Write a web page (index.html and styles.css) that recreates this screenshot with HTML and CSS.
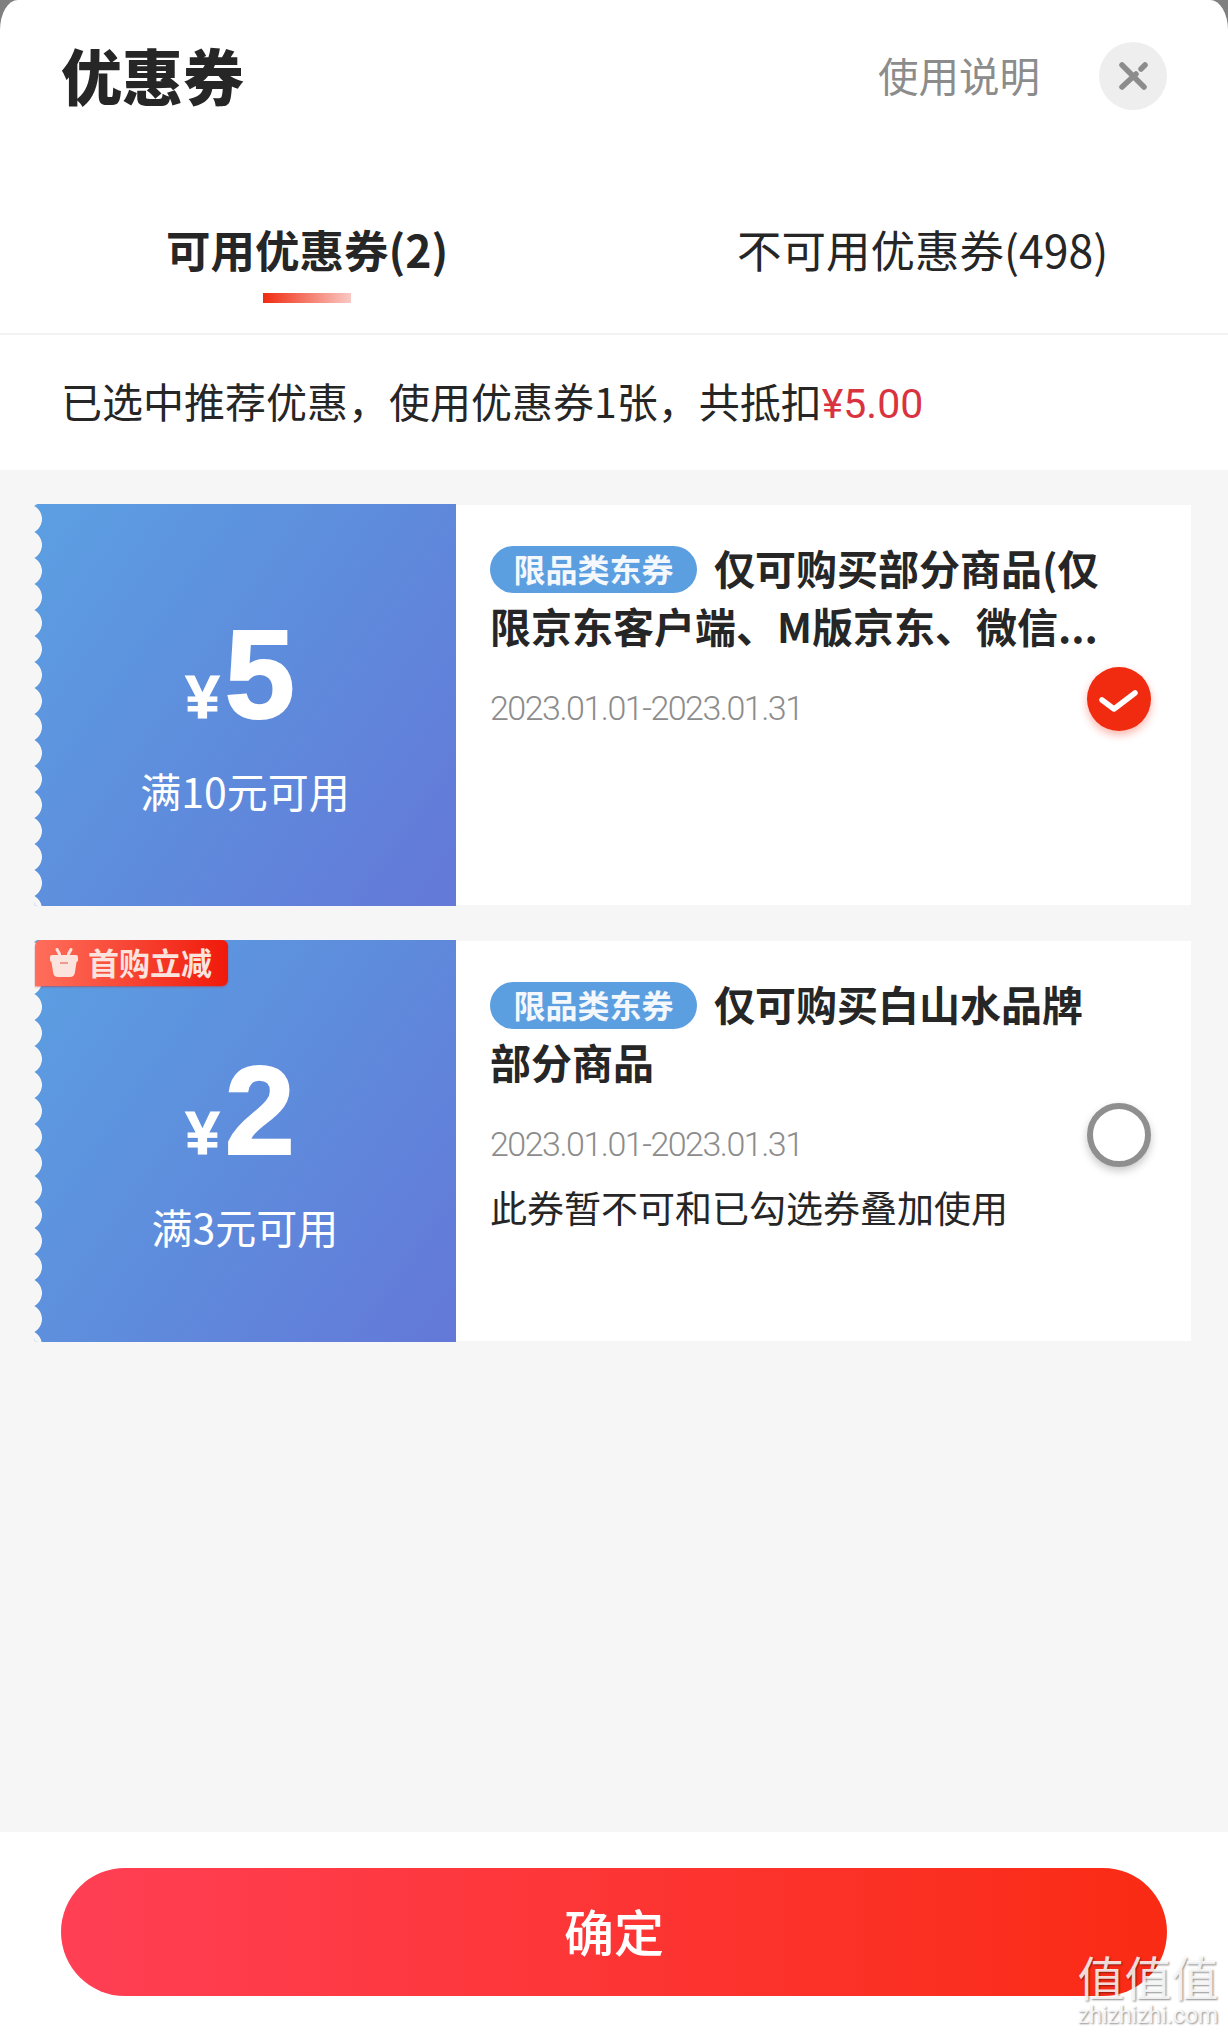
FILE: index.html
```html
<!DOCTYPE html>
<html lang="zh-CN">
<head>
<meta charset="utf-8">
<title>优惠券</title>
<link rel="stylesheet" href="styles.css">
</head>
<body>
<div class="sheet">
  <header class="head">
    <h1 class="title">优惠券</h1>
    <span class="help">使用说明</span>
    <span class="close"><svg viewBox="0 0 68 68" width="68" height="68"><path d="M23 23L45 45M46 23L42 27M37 32L23 45" class="close-x"/></svg></span>
  </header>
  <nav class="tabs">
    <div class="tab tab-on">可用优惠券(2)<i class="tab-line"></i></div>
    <div class="tab tab-off">不可用优惠券(498)</div>
  </nav>
  <div class="summary">已选中推荐优惠，使用优惠券1张，共抵扣<span class="red">¥5.00</span></div>
  <main class="list">
    <article class="coupon">
      <div class="face">
        <i class="scallop"></i>
        <div class="amount"><span class="yen">¥</span><span class="num">5</span></div>
        <div class="cond">满10元可用</div>
      </div>
      <div class="info">
        <div class="name"><span class="pill">限品类东券</span><span class="name-text">仅可购买部分商品(仅<br>限京东客户端、M版京东、微信...</span></div>
        <div class="date">2023.01.01-2023.01.31</div>
        <span class="check check-on"><svg viewBox="0 0 64 64" width="64" height="64"><path d="M15 33L27 42L48 26" class="tick"/></svg></span>
      </div>
    </article>
    <article class="coupon">
      <div class="face">
        <i class="scallop"></i>
        <div class="tag">
          <svg viewBox="0 0 30 30" width="30" height="30"><path d="M8 1.500L10.500 6M22 1.500L19.500 6" class="tag-ear"/><path d="M1 9Q1 7 3 7H27Q29 7 29 9V12Q29 14 27.500 14L26 24Q25.500 29 21 29H9Q4.500 29 4 24L2.500 14Q1 14 1 12Z" class="tag-body"/><path d="M11 15H19" class="tag-dash"/></svg>
          <span>首购立减</span>
        </div>
        <div class="amount"><span class="yen">¥</span><span class="num">2</span></div>
        <div class="cond">满3元可用</div>
      </div>
      <div class="info">
        <div class="name"><span class="pill">限品类东券</span><span class="name-text">仅可购买白山水品牌<br>部分商品</span></div>
        <div class="date">2023.01.01-2023.01.31</div>
        <div class="note">此券暂不可和已勾选券叠加使用</div>
        <span class="check check-off"></span>
      </div>
    </article>
  </main>
  <footer class="foot">
    <button class="ok">确定</button>
    <div class="mark"><div class="mark-cn">值值值</div><div class="mark-en">zhizhizhi.com</div></div>
  </footer>
</div>
</body>
</html>
```

FILE: styles.css
```css
* { box-sizing: border-box; }
html, body { margin: 0; padding: 0; }
body {
  width: 1228px;
  height: 2034px;
  background: #808080;
  font-family: "Noto Sans CJK SC", "Noto Sans", sans-serif;
  color: #262626;
  overflow: hidden;
}
.sheet {
  height: 2034px;
  display: flex;
  flex-direction: column;
  background: #fff;
  border-radius: 18px 18px 0 0 / 30px 30px 0 0;
  overflow: hidden;
}
.head {
  height: 158px;
  flex: none;
  display: flex;
  align-items: flex-start;
  padding: 42px 61px 0 61px;
}
.title {
  margin: 0;
  font-size: 61px;
  line-height: 72px;
  font-weight: 900;
  flex: 1;
  margin-top: -3px;
}
.help {
  font-size: 40.500px;
  line-height: 68px;
  color: #8c8c8c;
  margin-top: -1px;
  margin-right: 59px;
}
.close {
  width: 68px;
  height: 68px;
  border-radius: 50%;
  background: #eeeeee;
  display: block;
}
.close svg { display: block; }
.close-x { fill: none; stroke: #8c8c8c; stroke-width: 5.500; stroke-linecap: round; }
.tabs {
  height: 177px;
  flex: none;
  display: flex;
  border-bottom: 2px solid #f2f2f2;
  position: relative;
}
.tab { font-size: 44.500px; line-height: 60px; padding-top: 61px; white-space: nowrap; }
.tab-on { font-weight: 700; margin-left: 166px; position: relative; width: 571px; }
.tab-off { font-weight: 400; }
.tab-line {
  position: absolute;
  left: 97px;
  top: 135px;
  width: 88px;
  height: 10px;
  background: linear-gradient(90deg, #f02b10, #f9c9c4);
}
.summary {
  height: 135px;
  flex: none;
  padding: 0 0 5px 61px;
  font-size: 41px;
  line-height: 130px;
  white-space: nowrap;
}
.red { color: #d9333f; font-family: "Roboto", sans-serif; }
.list {
  flex: 1;
  background: #f6f6f6;
  padding: 34px 37px 0 34px;
  display: flex;
  flex-direction: column;
  gap: 34px;
}
.coupon { display: flex; height: 402px; }
.face {
  width: 422px;
  position: relative;
  overflow: hidden;
  flex: none;
  background: linear-gradient(125deg, #5c9fe2 0%, #5e8cdc 50%, #6478d8 100%);
  color: #fff;
  display: flex;
  flex-direction: column;
  align-items: center;
  border-radius: 4px 0 0 4px;
}
.scallop {
  position: absolute;
  left: 0;
  top: 0;
  width: 10px;
  height: 100%;
  background: radial-gradient(circle at -7px 13px, #f6f6f6 14.500px, rgba(246, 246, 246, 0) 15.300px) 0 2px / 10px 26px repeat-y;
}
.amount {
  display: flex;
  align-items: baseline;
  height: 150px;
  margin-top: 96px;
  line-height: 150px;
  font-family: "Liberation Sans", sans-serif;
  font-weight: 700;
  padding-right: 10px;
}
.yen { font-size: 62px; margin-right: 5px; -webkit-text-stroke: 1px #fff; }
.num { font-size: 126px; -webkit-text-stroke: 2px #fff; }
.cond { font-size: 41px; line-height: 56px; margin-top: 12px; white-space: nowrap; }
.tag {
  position: absolute;
  left: 1px;
  top: 0;
  width: 193px;
  height: 46px;
  border-radius: 6px 6px 6px 0;
  background: linear-gradient(90deg, #ff6f5c, #f0190a);
  box-shadow: 0 1px 2px rgba(200, 40, 40, .5);
  display: flex;
  align-items: center;
  gap: 9px;
  padding: 0 0 3px 14px;
  font-size: 31px;
  color: #fbe3de;
  font-weight: 700;
  white-space: nowrap;
}
.tag svg { display: block; flex: none; margin-top: 3px; }
.tag-ear { fill: none; stroke: #fbe3de; stroke-width: 3; stroke-linecap: round; }
.tag-body { fill: #fbe3de; }
.tag-dash { fill: none; stroke: #ee9a8e; stroke-width: 2; }
.info {
  flex: 1;
  background: #fff;
  margin: 1px 0;
  padding: 33px 0 0 34px;
  position: relative;
}
.name { font-size: 41px; line-height: 58px; font-weight: 700; color: #262626; }
.pill {
  display: inline-block;
  width: 207px;
  height: 47px;
  line-height: 44px;
  margin-right: 17px;
  border-radius: 24px;
  background: #5b9fe0;
  color: #f4f8fd;
  font-size: 32px;
  text-align: center;
  vertical-align: 3px;
}
.date {
  margin-top: 32px;
  font-family: "Roboto", sans-serif;
  font-weight: 300;
  font-size: 34px;
  line-height: 44px;
  letter-spacing: -1.500px;
  color: #8c8c8c;
}
.note { margin-top: 13px; font-size: 37px; line-height: 56px; color: #262626; white-space: nowrap; }
.check {
  position: absolute;
  left: 631px;
  top: 162px;
  width: 64px;
  height: 64px;
  border-radius: 50%;
}
.check svg { display: block; }
.check-on { background: #f02b10; box-shadow: 0 4px 8px rgba(240, 43, 16, .35); }
.check-off { border: 6px solid #8f8f8f; background: #fff; box-shadow: 0 4px 8px rgba(0, 0, 0, .22); }
.tick { fill: none; stroke: #fff; stroke-width: 5.500; stroke-linecap: round; stroke-linejoin: round; }
.foot {
  height: 202px;
  flex: none;
  padding: 36px 61px 0;
  position: relative;
}
.ok {
  display: block;
  width: 1106px;
  height: 128px;
  padding: 0 0 5px;
  border: 0;
  border-radius: 64px;
  background: linear-gradient(90deg, #ff3f55, #fa2b14);
  color: #fff;
  font-family: inherit;
  font-size: 50px;
  font-weight: 500;
}
.mark {
  position: absolute;
  right: 8px;
  bottom: 6px;
  width: 144px;
  text-align: center;
  color: rgba(255, 255, 255, .85);
  text-shadow: 1px 1px 2px rgba(0, 0, 0, .45);
}
.mark-cn { font-size: 47px; line-height: 56px; font-weight: 400; white-space: nowrap; }
.mark-en { font-family: "Roboto", sans-serif; font-size: 23px; line-height: 24px; white-space: nowrap; }
```
